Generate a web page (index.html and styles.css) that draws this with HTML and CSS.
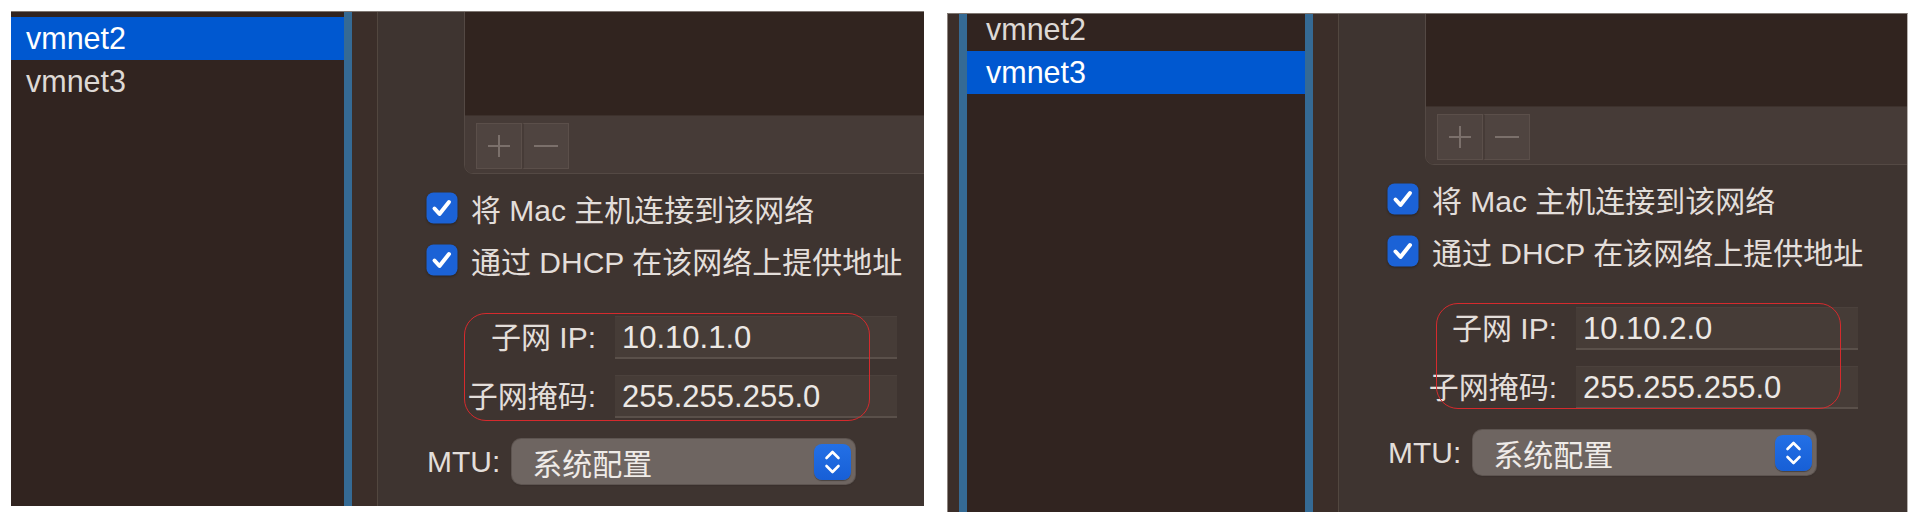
FILE: index.html
```html
<!DOCTYPE html>
<html lang="zh-CN">
<head>
  <meta charset="UTF-8" />
  <title>vmnet 网络设置</title>
  <link rel="stylesheet" href="styles.css">
</head>
<body>
  <div class="shots">

    <section class="panel panel-a">
      <div class="sidebar">
        <ul class="nets">
          <li class="sel">vmnet2</li>
          <li>vmnet3</li>
        </ul>
      </div>
      <div class="stripe"></div>
      <div class="gutter"></div>
      <div class="detail">
        <div class="table">
          <div class="table-body"></div>
          <div class="table-foot">
            <span class="btn">
              <svg width="44" height="44" viewBox="0 0 44 44"><path d="M22 11v22M11 22h22" stroke="#7b706b" stroke-width="2"/></svg>
            </span>
            <span class="btn">
              <svg width="44" height="44" viewBox="0 0 44 44"><path d="M10 22h24" stroke="#7b706b" stroke-width="2"/></svg>
            </span>
          </div>
        </div>

        <label class="check">
          <svg class="box" width="32" height="32" viewBox="0 0 32 32"><rect x="0.5" y="0.5" width="31" height="31" rx="7" fill="#1b62d6"/><path d="M8.5 16.5l5 5.5 9.5-12" fill="none" stroke="#fff" stroke-width="4" stroke-linecap="round" stroke-linejoin="round"/></svg>
          将 Mac 主机连接到该网络
        </label>
        <label class="check">
          <svg class="box" width="32" height="32" viewBox="0 0 32 32"><rect x="0.5" y="0.5" width="31" height="31" rx="7" fill="#1b62d6"/><path d="M8.5 16.5l5 5.5 9.5-12" fill="none" stroke="#fff" stroke-width="4" stroke-linecap="round" stroke-linejoin="round"/></svg>
          通过 DHCP 在该网络上提供地址
        </label>

        <div class="subnet">
          <div class="mark"></div>
          <span class="lbl">子网 IP:</span>
          <div class="field">10.10.1.0</div>
          <span class="lbl">子网掩码:</span>
          <div class="field">255.255.255.0</div>
        </div>

        <div class="mtu">
          <span>MTU:</span>
          <div class="popup">
            系统配置
            <span class="stepper">
              <svg width="37" height="36" viewBox="0 0 37 36"><path d="M12.5 14l6-6 6 6M12.5 22l6 6 6-6" fill="none" stroke="#fff" stroke-width="2.6" stroke-linecap="round" stroke-linejoin="round"/></svg>
            </span>
          </div>
        </div>
      </div>
    </section>

    <section class="panel panel-b">
      <div class="edge"></div>
      <div class="stripe"></div>
      <div class="sidebar">
        <ul class="nets">
          <li>vmnet2</li>
          <li class="sel">vmnet3</li>
        </ul>
      </div>
      <div class="stripe"></div>
      <div class="gutter"></div>
      <div class="detail">
        <div class="table">
          <div class="table-body"></div>
          <div class="table-foot">
            <span class="btn">
              <svg width="44" height="44" viewBox="0 0 44 44"><path d="M22 11v22M11 22h22" stroke="#7b706b" stroke-width="2"/></svg>
            </span>
            <span class="btn">
              <svg width="44" height="44" viewBox="0 0 44 44"><path d="M10 22h24" stroke="#7b706b" stroke-width="2"/></svg>
            </span>
          </div>
        </div>

        <label class="check">
          <svg class="box" width="32" height="32" viewBox="0 0 32 32"><rect x="0.5" y="0.5" width="31" height="31" rx="7" fill="#1b62d6"/><path d="M8.5 16.5l5 5.5 9.5-12" fill="none" stroke="#fff" stroke-width="4" stroke-linecap="round" stroke-linejoin="round"/></svg>
          将 Mac 主机连接到该网络
        </label>
        <label class="check">
          <svg class="box" width="32" height="32" viewBox="0 0 32 32"><rect x="0.5" y="0.5" width="31" height="31" rx="7" fill="#1b62d6"/><path d="M8.5 16.5l5 5.5 9.5-12" fill="none" stroke="#fff" stroke-width="4" stroke-linecap="round" stroke-linejoin="round"/></svg>
          通过 DHCP 在该网络上提供地址
        </label>

        <div class="subnet">
          <div class="mark"></div>
          <span class="lbl">子网 IP:</span>
          <div class="field">10.10.2.0</div>
          <span class="lbl">子网掩码:</span>
          <div class="field">255.255.255.0</div>
        </div>

        <div class="mtu">
          <span>MTU:</span>
          <div class="popup">
            系统配置
            <span class="stepper">
              <svg width="37" height="36" viewBox="0 0 37 36"><path d="M12.5 14l6-6 6 6M12.5 22l6 6 6-6" fill="none" stroke="#fff" stroke-width="2.6" stroke-linecap="round" stroke-linejoin="round"/></svg>
            </span>
          </div>
        </div>
      </div>
    </section>

  </div>
</body>
</html>
```

FILE: styles.css
```css
body {
  margin: 0;
  background: #ffffff;
  font-family: 'Liberation Sans', 'Noto Sans CJK SC', sans-serif;
  color: #e3deda;
  overflow: hidden;
}

.shots {
  display: flex;
  align-items: flex-start;
  gap: 23px;
  padding: 11px 0 0 11px;
}

.panel {
  display: flex;
  overflow: hidden;
  background: #3e3430;
  border-top: 1px solid #7e7671;
  box-sizing: border-box;
}

.panel-a {
  --shift: 5px;
  width: 913px;
  height: 495px;
}

.panel-b {
  --shift: -6px;
  width: 961px;
  height: 499px;
  margin-top: 2px;
  border-right: 1px solid #b5b0ad;
}

/* left list of networks */
.sidebar {
  background: #312420;
  flex: none;
}

.panel-a .sidebar { width: 333px; }
.panel-b .sidebar { width: 338px; }

.nets {
  list-style: none;
  margin: var(--shift) 0 0;
  padding: 0;
}

.nets li {
  height: 43px;
  line-height: 43px;
  font-size: 30.5px;
  padding-left: 19px;
  color: #ded9d5;
}

.panel-a .nets li { padding-left: 15px; }

.nets li.sel {
  background: #0058d0;
  color: #ffffff;
}

.stripe {
  flex: none;
  width: 8px;
  background: #356a94;
}

.edge {
  flex: none;
  width: 11px;
  background: #3b2e29;
  border-left: 1px solid #8d8580;
}

.gutter {
  flex: none;
  width: 25px;
  background: #3b2e29;
  border-right: 1px solid #52473f;
}

/* right side settings */
.detail {
  flex: 1;
  min-width: 0;
  padding-left: 48px;
  margin-top: calc(var(--shift) - 2px);
  position: relative;
}

.table {
  margin: -21px -40px 0 38px;
  border: 1px solid #544944;
  border-radius: 0 0 0 9px;
  overflow: hidden;
}

.table-body {
  height: 120px;
  background: #31241f;
  border-bottom: 1px solid #3d312c;
}

.table-foot {
  height: 57px;
  background: #463b37;
  display: flex;
  align-items: flex-start;
  padding: 7px 0 0 11px;
  box-sizing: border-box;
}

.btn {
  display: flex;
  width: 44px;
  height: 44px;
  background: #4f4440;
  border: 1px solid #5b4f4a;
}

.btn + .btn {
  border-left: 2px solid #463b37;
}

.check {
  display: flex;
  align-items: center;
  gap: 13px;
  height: 52px;
  font-size: 30px;
  white-space: nowrap;
}

.check:first-of-type {
  margin-top: 8px;
}

.box {
  flex: none;
  filter: drop-shadow(0 1px 1px rgba(0, 0, 0, 0.35));
}

.subnet {
  position: relative;
  display: grid;
  grid-template-columns: 170px 282px;
  grid-auto-rows: 43px;
  column-gap: 19px;
  row-gap: 16px;
  margin-top: 30px;
  font-size: 30px;
}

.lbl {
  text-align: right;
  line-height: 43px;
  white-space: nowrap;
}

.field {
  background: #463c37;
  border-top: 1px solid #4b413c;
  border-bottom: 2px solid #5a504a;
  box-sizing: border-box;
  line-height: 41px;
  padding-left: 7px;
  font-size: 31px;
  color: #ece8e4;
}

/* red annotation drawn over the two rows */
.mark {
  position: absolute;
  left: 38px;
  top: -3px;
  width: 406px;
  height: 108px;
  border: 1.5px solid #d52a2d;
  border-radius: 22px;
  box-sizing: border-box;
  pointer-events: none;
  z-index: 1;
}

.panel-b .mark {
  left: 49px;
  top: -4px;
  width: 405px;
  height: 106px;
}

.mtu {
  display: flex;
  align-items: center;
  gap: 12px;
  margin: 21px 0 0 1px;
  font-size: 30px;
}

.popup {
  position: relative;
  width: 343px;
  height: 45px;
  box-sizing: border-box;
  background: #6e6561;
  border-radius: 9px;
  box-shadow: 0 0 0 1px #5d5450, 0 1px 2px rgba(0, 0, 0, 0.3);
  display: flex;
  align-items: center;
  justify-content: space-between;
  padding: 0 4px 0 20px;
  color: #efebe8;
}

.stepper {
  display: flex;
  width: 37px;
  height: 36px;
  border-radius: 8px;
  background: linear-gradient(#2370e6, #175fd6);
  box-shadow: 0 1px 1px rgba(0, 0, 0, 0.35);
}
```
